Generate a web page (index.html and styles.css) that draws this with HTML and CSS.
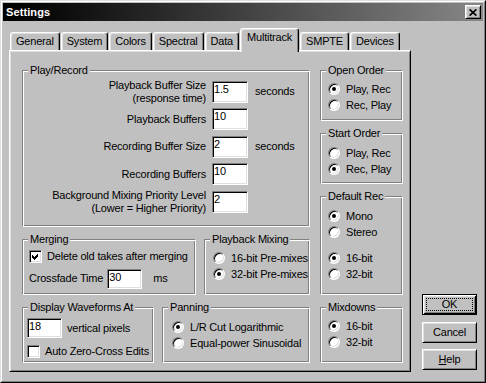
FILE: index.html
```html
<!DOCTYPE html>
<html>
<head>
<meta charset="utf-8">
<title>Settings</title>
<link rel="stylesheet" href="styles.css">
</head>
<body>
<div class="window">
  <div class="frame">
    <div class="titlebar">
      <span class="title">Settings</span>
      <span class="close"><svg width="8" height="7" viewBox="0 0 8 7"><path d="M0.6 0.4 L7.4 6.6 M7.4 0.4 L0.6 6.6" stroke="#000" stroke-width="1.7" fill="none"/></svg></span>
    </div>
    <div class="main">
      <div class="tabctl">
        <div class="tabstrip">
          <div class="tab">General</div>
          <div class="tab">System</div>
          <div class="tab">Colors</div>
          <div class="tab">Spectral</div>
          <div class="tab">Data</div>
          <div class="tab active">Multitrack</div>
          <div class="tab">SMPTE</div>
          <div class="tab">Devices</div>
        </div>
        <div class="panel">
          <div class="leftcol">
            <div class="group g-play">
              <span class="legend">Play/Record</span>
              <div class="formgrid">
                <div class="lbl">Playback Buffer Size<br>(response time)</div>
                <div class="field">1.5</div>
                <div class="unit">seconds</div>
                <div class="lbl">Playback Buffers</div>
                <div class="field">10</div>
                <div class="unit"></div>
                <div class="lbl">Recording Buffer Size</div>
                <div class="field">2</div>
                <div class="unit">seconds</div>
                <div class="lbl">Recording Buffers</div>
                <div class="field">10</div>
                <div class="unit"></div>
                <div class="lbl">Background Mixing Priority Level<br>(Lower = Higher Priority)</div>
                <div class="field">2</div>
                <div class="unit"></div>
              </div>
            </div>
            <div class="row">
              <div class="group g-merge">
                <span class="legend">Merging</span>
                <div class="check-row">
                  <span class="checkbox"><svg width="7" height="7" viewBox="0 0 7 7"><polygon points="0,2 2,4 6,0 6,3 2,7 0,5" fill="#000"/></svg></span>
                  <span>Delete old takes after merging</span>
                </div>
                <div class="inline-row">
                  <span>Crossfade Time</span>
                  <span class="field sm">30</span>
                  <span class="unit-ms">ms</span>
                </div>
              </div>
              <div class="group g-mix">
                <span class="legend">Playback Mixing</span>
                <div class="opt"><span class="radio"></span><span>16-bit Pre-mixes</span></div>
                <div class="opt"><span class="radio on"></span><span>32-bit Pre-mixes</span></div>
              </div>
            </div>
            <div class="row">
              <div class="group g-disp">
                <span class="legend">Display Waveforms At</span>
                <div class="inline-row">
                  <span class="field sm">18</span>
                  <span class="unit-px">vertical pixels</span>
                </div>
                <div class="check-row second">
                  <span class="checkbox"></span>
                  <span>Auto Zero-Cross Edits</span>
                </div>
              </div>
              <div class="group g-pan">
                <span class="legend">Panning</span>
                <div class="opt"><span class="radio on"></span><span>L/R Cut Logarithmic</span></div>
                <div class="opt"><span class="radio"></span><span>Equal-power Sinusoidal</span></div>
              </div>
            </div>
          </div>
          <div class="rightcol">
            <div class="group g-open">
              <span class="legend">Open Order</span>
              <div class="opt"><span class="radio on"></span><span>Play, Rec</span></div>
              <div class="opt"><span class="radio"></span><span>Rec, Play</span></div>
            </div>
            <div class="group g-start">
              <span class="legend">Start Order</span>
              <div class="opt"><span class="radio"></span><span>Play, Rec</span></div>
              <div class="opt"><span class="radio on"></span><span>Rec, Play</span></div>
            </div>
            <div class="group g-rec">
              <span class="legend">Default Rec</span>
              <div class="opt"><span class="radio on"></span><span>Mono</span></div>
              <div class="opt"><span class="radio"></span><span>Stereo</span></div>
              <div class="opt spaced"><span class="radio on"></span><span>16-bit</span></div>
              <div class="opt"><span class="radio"></span><span>32-bit</span></div>
            </div>
            <div class="group g-mixdown">
              <span class="legend">Mixdowns</span>
              <div class="opt"><span class="radio on"></span><span>16-bit</span></div>
              <div class="opt"><span class="radio"></span><span>32-bit</span></div>
            </div>
          </div>
        </div>
      </div>
      <div class="buttons">
        <div class="btn default"><span class="focus"></span>OK</div>
        <div class="btn">Cancel</div>
        <div class="btn"><span><u>H</u>elp</span></div>
      </div>
    </div>
  </div>
</div>
</body>
</html>
```
FILE: styles.css
```css
* { box-sizing: border-box; }
html, body { margin: 0; padding: 0; }
body {
  width: 486px;
  height: 383px;
  overflow: hidden;
  background: #c0c0c0;
  font-family: "Liberation Sans", Arial, sans-serif;
  font-size: 11px;
  letter-spacing: -0.2px;
  line-height: 13px;
  color: #000;
}
.window {
  width: 486px;
  height: 383px;
  border: 1px solid;
  border-color: #dfdfdf #000 #000 #dfdfdf;
}
.frame {
  height: 100%;
  border: 1px solid;
  border-color: #fff #808080 #808080 #fff;
  padding: 1px;
  display: flex;
  flex-direction: column;
}
.titlebar {
  height: 18px;
  flex: none;
  display: flex;
  align-items: center;
  justify-content: space-between;
  padding: 0 2px 0 3px;
  background: linear-gradient(to right, #000 0%, #0c0c0c 12%, #878787 100%);
}
.title { color: #fff; font-weight: bold; letter-spacing: 0.1px; }
.close {
  width: 16px;
  height: 14px;
  background: #c0c0c0;
  border: 1px solid;
  border-color: #fff #000 #000 #fff;
  box-shadow: inset 1px 1px #dfdfdf, inset -1px -1px #808080;
  display: flex;
  align-items: center;
  justify-content: center;
}
.main {
  flex: 1;
  display: flex;
  gap: 11px;
  padding: 7px 6px 8px 6px;
}
.tabctl {
  width: 402px;
  display: flex;
  flex-direction: column;
}
.tabstrip {
  height: 22px;
  flex: none;
  display: flex;
  align-items: flex-end;
  gap: 1px;
  padding-left: 1px;
}
.tab {
  height: 18px;
  padding: 0 5px;
  border: 1px solid;
  border-bottom: 0;
  border-color: #fff #000 transparent #fff;
  border-radius: 3px 3px 0 0;
  box-shadow: inset -1px 0 #808080, inset 1px 1px #dfdfdf;
  display: flex;
  align-items: center;
  white-space: nowrap;
}
.tab.active {
  height: 24px;
  margin-bottom: -2px;
  padding: 2px 6px 0 6px;
  align-items: flex-start;
  position: relative;
  z-index: 2;
  background: #c0c0c0;
}
.panel {
  flex: 1;
  position: relative;
  z-index: 1;
  border: 1px solid;
  border-color: #fff #000 #000 #fff;
  box-shadow: inset 1px 1px #dfdfdf, inset -1px -1px #808080;
  padding: 19px 7px 8px 12px;
  display: flex;
  gap: 10px;
}
.leftcol {
  width: 288px;
  display: flex;
  flex-direction: column;
  gap: 12px;
}
.rightcol {
  width: 83px;
  display: flex;
  flex-direction: column;
  gap: 12px;
}
.row {
  height: 56px;
  flex: none;
  display: flex;
  gap: 8px;
}
.group {
  position: relative;
  border: 1px solid;
  border-color: #808080 #fff #fff #808080;
  box-shadow: inset 1px 1px #fff, inset -1px -1px #808080;
}
.legend {
  position: absolute;
  top: -7px;
  left: 5px;
  padding: 0 2px;
  background: #c0c0c0;
  line-height: 13px;
  white-space: nowrap;
}
.g-play { flex: 1; padding-top: 7px; }
.formgrid {
  display: grid;
  grid-template-columns: 183px 36px auto;
  grid-auto-rows: 27.5px;
  column-gap: 6px;
  align-items: center;
}
.lbl { text-align: right; white-space: nowrap; }
.unit { margin-left: 1px; }
.field {
  height: 22px;
  background: #fff;
  border: 1px solid;
  border-color: #808080 #fff #fff #808080;
  box-shadow: inset 1px 1px #000, inset -1px -1px #dfdfdf;
  padding: 1px 2px 0 1px;
  line-height: 13px;
}
.field.sm { width: 35px; height: 20px; flex: none; }
.g-merge { width: 174px; padding: 10px 0 0 6px; }
.g-mix { flex: 1; padding: 10px 0 0 8px; }
.g-disp { width: 132px; padding: 10px 0 0 4px; }
.g-pan { flex: 1; padding: 11px 0 0 9px; }
.g-open { height: 51px; flex: none; padding: 10px 0 0 7px; }
.g-start { height: 51px; flex: none; padding: 11px 0 0 7px; }
.g-rec { height: 99px; flex: none; padding: 11px 0 0 7px; }
.g-mixdown { flex: 1; padding: 10px 0 0 7px; }
.check-row {
  display: flex;
  align-items: center;
  gap: 5px;
  height: 13px;
  white-space: nowrap;
}
.check-row.second { margin-top: 7px; }
.inline-row {
  display: flex;
  align-items: center;
  height: 21px;
  margin-top: 5px;
  white-space: nowrap;
}
.g-merge .inline-row .field { margin-left: 4px; }
.g-disp .inline-row { margin-top: 0; height: 20px; }
.unit-ms { margin-left: 11px; }
.unit-px { margin-left: 5px; }
.checkbox {
  width: 13px;
  height: 13px;
  flex: none;
  background: #fff;
  border: 1px solid;
  border-color: #808080 #fff #fff #808080;
  box-shadow: inset 1px 1px #000, inset -1px -1px #dfdfdf;
  padding: 2px;
  display: flex;
}
.checkbox svg { display: block; shape-rendering: crispEdges; }
.opt {
  display: flex;
  align-items: center;
  gap: 6px;
  height: 16px;
  white-space: nowrap;
}
.opt.spaced { margin-top: 10px; }
.radio {
  width: 12px;
  height: 12px;
  flex: none;
  position: relative;
  border-radius: 50%;
  background: #fff;
  border: 1px solid;
  border-color: #808080 #fff #fff #808080;
  box-shadow: inset 1px 1px #000, inset -1px -1px #dfdfdf;
}
.radio.on::after {
  content: "";
  position: absolute;
  left: 3px;
  top: 3px;
  width: 4px;
  height: 4px;
  border-radius: 50%;
  background: #000;
}
.buttons {
  width: 55px;
  display: flex;
  flex-direction: column;
  justify-content: flex-end;
  gap: 6.5px;
  padding-bottom: 2px;
}
.btn {
  height: 21px;
  position: relative;
  display: flex;
  align-items: center;
  justify-content: center;
  border: 1px solid;
  border-color: #fff #000 #000 #fff;
  box-shadow: inset 1px 1px #dfdfdf, inset -1px -1px #808080;
}
.btn.default {
  border-color: #000;
  box-shadow: inset 1px 1px #fff, inset -1px -1px #000, inset 2px 2px #dfdfdf, inset -2px -2px #808080;
}
.focus {
  position: absolute;
  left: 3px;
  top: 3px;
  right: 3px;
  bottom: 3px;
  border: 1px dotted #000;
}
```
